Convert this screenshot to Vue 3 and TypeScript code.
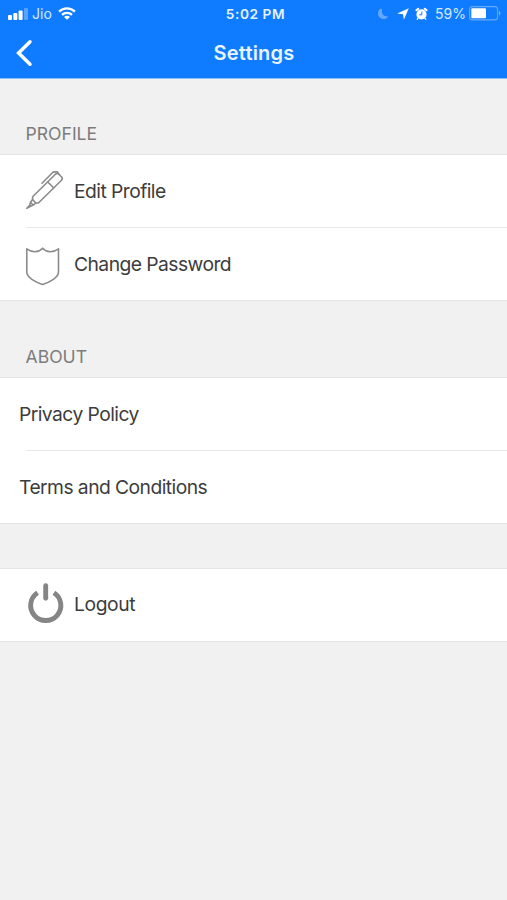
<script setup lang="ts">
type IconName = 'pen' | 'shield' | 'power'
interface Row {
  label: string
  icon?: IconName
  key: string
}
interface Section {
  key: string
  title?: string
  rows: Row[]
}

const sections: Section[] = [
  {
    key: 'profile',
    title: 'PROFILE',
    rows: [
      { key: 'edit', label: 'Edit Profile', icon: 'pen' },
      { key: 'change', label: 'Change Password', icon: 'shield' },
    ],
  },
  {
    key: 'about',
    title: 'ABOUT',
    rows: [
      { key: 'privacy', label: 'Privacy Policy' },
      { key: 'terms', label: 'Terms and Conditions' },
    ],
  },
  { key: 'session', rows: [{ key: 'logout', label: 'Logout', icon: 'power' }] },
]
</script>

<template>
  <div class="screen">
    <header class="top">
      <div class="status">
        <div class="side">
          <svg class="signal" width="20" height="12" viewBox="0 0 20 12" fill="#fff">
            <rect x="0" y="7" width="4" height="5" rx="1" />
            <rect x="5.3" y="5" width="4" height="7" rx="1" />
            <rect x="10.6" y="2.5" width="4" height="9.5" rx="1" />
            <rect x="16" y="0" width="4" height="12" rx="1" opacity=".3" />
          </svg>
          <span class="carrier">Jio</span>
          <svg class="wifi" width="18" height="13" viewBox="0 0 18 13">
            <g fill="none" stroke="#fff" stroke-width="2.3">
              <path d="M1.1 4.6C5.6.2 12.4.2 16.9 4.6" />
              <path d="M4 7.8C6.8 5.1 11.2 5.1 14 7.8" />
            </g>
            <path d="M9 12.8L6 9.9C7.6 8.5 10.4 8.5 12 9.9Z" fill="#fff" />
          </svg>
        </div>
        <span class="time">5:02 PM</span>
        <div class="side end">
          <svg class="moon" width="12" height="12" viewBox="0 0 12 12">
            <path d="M3.4.8A5.6 5.6 0 1 0 11.4 8.2C7.6 9.4 3.6 6 5.2 1.2Z" fill="#62a8ff" />
          </svg>
          <svg class="arrow" width="12" height="12" viewBox="0 0 12 12">
            <path d="M11.8.2L6.9 11.7L6 6.2L.2 5.6Z" fill="#fff" />
          </svg>
          <svg class="alarm" width="13" height="14" viewBox="0 0 13 14">
            <g fill="none" stroke="#fff" stroke-width="2" stroke-linecap="round">
              <path d="M1.4 3.2L3.2 1.7M11.6 3.2L9.8 1.7" />
              <path d="M3 11.4L2.2 12.4M10 11.4L10.8 12.4" stroke-width="1.2" />
            </g>
            <circle cx="6.5" cy="7.4" r="5.1" fill="#fff" />
            <path d="M6.8 4.6V7.8H4.2" fill="none" stroke="#0f7bff" stroke-width="1" />
          </svg>
          <span class="percent">59%</span>
          <svg class="battery" width="32" height="15" viewBox="0 0 32 15">
            <rect x=".6" y=".6" width="28" height="13.3" rx="3" fill="none" stroke="#64a9ff" stroke-width="1.1" />
            <rect x="2.3" y="2.3" width="14.7" height="9.9" rx="1" fill="#fff" />
            <path d="M30 5V9.6C31.9 9 31.9 5.6 30 5Z" fill="#78b5ff" />
          </svg>
        </div>
      </div>
      <div class="nav">
        <button class="back" type="button" aria-label="Back">
          <svg width="18" height="28" viewBox="0 0 18 28">
            <path d="M15 2.8L3.6 14L15 25.2" fill="none" stroke="#fff" stroke-width="3.5" stroke-linecap="round" />
          </svg>
        </button>
        <h1 class="title">Settings</h1>
      </div>
    </header>

    <section v-for="section in sections" :key="section.key" class="section">
      <h2 class="heading" :class="section.key">
        <span>{{ section.title }}</span>
      </h2>
      <ul class="rows">
        <li v-for="row in section.rows" :key="row.key" class="row" :class="{ plain: !row.icon }">
          <span v-if="row.icon" class="icon">
            <svg v-if="row.icon === 'pen'" width="40" height="42" viewBox="0 0 40 42" fill="none" stroke="#8b8b8b" stroke-width="1.6" stroke-linejoin="round" stroke-linecap="round">
              <path d="M7.6 26.8L30.4 4.2Q32.2 2.6 34 4.3L36.6 7Q38 8.6 36.5 10.2L13.4 33L10.8 33L7.6 29.6Z" />
              <path d="M7.6 29.6L5.5 32.3L8.2 35.1L10.8 33M5.5 32.3L4.7 35.2L1.8 38.3L5.6 36.2L8.2 35.1" />
              <path d="M22.8 12L28.5 17.8" />
              <path d="M17 13.2L27.4 2.7Q28.3 1.9 29.5 1.9H32.4L34 4.3" />
            </svg>
            <svg v-else-if="row.icon === 'shield'" width="40" height="42" viewBox="0 0 40 42" fill="none" stroke="#8b8b8b" stroke-width="1.6" stroke-linejoin="round">
              <path d="M1.8 5.8C7.5 9.9 13.5 9.5 17.6 5.2C21.7 9.5 27.8 9.9 33.5 5.8V29C33.5 34.4 25.2 39.2 17.6 41.4C10 39.2 1.8 34.4 1.8 29Z" />
            </svg>
            <svg v-else width="40" height="42" viewBox="0 0 40 42" fill="none" stroke="#858585" stroke-width="4.9">
              <path d="M12.6 8.7A15.1 15.1 0 1 0 28.9 8.7" />
              <path d="M20.7 1.8V14.3" stroke-linecap="round" />
            </svg>
          </span>
          <span class="label" :class="row.key">{{ row.label }}</span>
        </li>
      </ul>
    </section>
  </div>
</template>

<style>
body {
  margin: 0;
  background: #f1f1f1;
}
</style>

<style scoped>
.screen {
  min-height: 900px;
  background: #f1f1f1;
  font-family: Inter, "Liberation Sans", sans-serif;
  color: #3c3c3c;
}
.top {
  height: 79px;
  box-sizing: border-box;
  background: #0f7bff;
  border-bottom: 1px solid #8abfff;
  color: #fff;
}
.status {
  display: grid;
  grid-template-columns: 1fr auto 1fr;
  align-items: center;
  height: 27px;
  padding: 0 6px 0 8px;
}
.side {
  display: flex;
  align-items: center;
  font-size: 14px;
  color: #d9e9ff;
}
.end {
  justify-content: flex-end;
}
.carrier {
  margin-left: 4px;
  letter-spacing: 0.1px;
}
.wifi {
  margin-left: 6px;
}
.time {
  padding-left: 2px;
  font-size: 13.7px;
  font-weight: 600;
  letter-spacing: 0.55px;
  color: #e6f1ff;
}
.arrow {
  margin-left: 8px;
}
.alarm {
  margin-left: 6px;
}
.percent {
  margin-left: 7px;
}
.battery {
  margin-left: 3px;
}
.nav {
  display: grid;
  grid-template-columns: 44px 1fr 44px;
  align-items: center;
  height: 51px;
}
.back {
  display: flex;
  padding: 0 0 0 15px;
  border: 0;
  background: none;
}
.title {
  margin: 0;
  padding-left: 1px;
  text-align: center;
  font-size: 20px;
  font-weight: 600;
  line-height: 26px;
  letter-spacing: 0.2px;
  color: #e9f4ff;
}
.heading {
  display: flex;
  align-items: flex-end;
  height: 75px;
  margin: 0;
  padding: 0 26px 10px 25.5px;
  box-sizing: border-box;
  font-size: 17.6px;
  font-weight: 400;
  line-height: 21px;
  color: #7c7c7c;
}
.heading.about {
  height: 76px;
}
.heading.session {
  height: 44px;
}
.rows {
  margin: 0;
  padding: 0;
  list-style: none;
  background: #fff;
  border-top: 1px solid #e4e4e4;
  border-bottom: 1px solid #e4e4e4;
}
.row {
  display: flex;
  align-items: center;
  height: 72px;
  padding-left: 25px;
}
.row + .row {
  height: 73px;
  box-sizing: border-box;
  background: linear-gradient(#e8e8e8, #e8e8e8) 26px 0 / 100% 1px no-repeat;
}
.plain {
  padding-left: 19px;
}
.icon {
  display: flex;
  width: 49px;
}
.icon svg {
  overflow: visible;
}
.label {
  font-size: 19.3px;
  line-height: 24px;
  letter-spacing: -0.56px;
  white-space: nowrap;
}
.logout {
  margin-top: -2px;
  letter-spacing: -0.4px;
}
</style>
